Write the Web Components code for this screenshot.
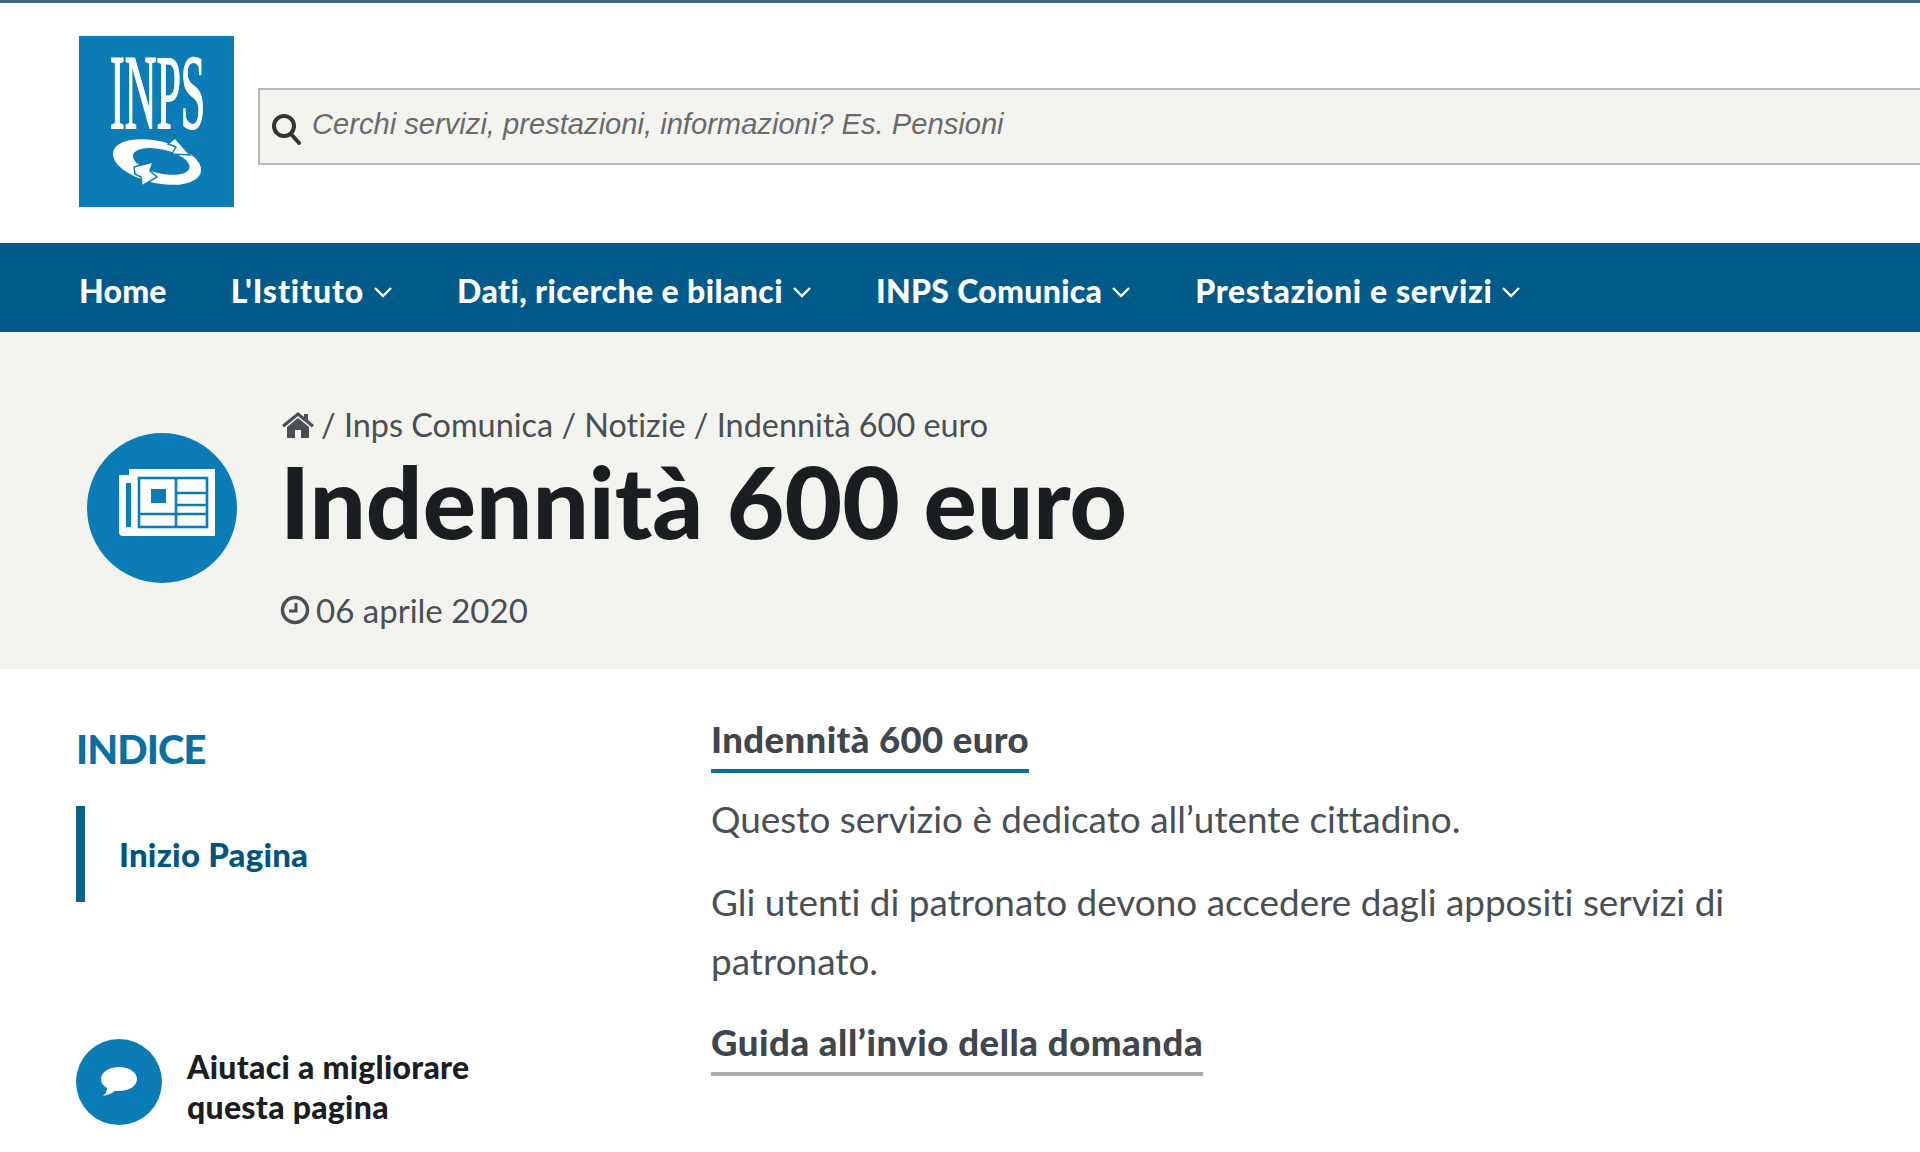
<!DOCTYPE html>
<html lang="it"><head><meta charset="utf-8"><title>Indennità 600 euro</title>
<style>
html,body{margin:0;padding:0;background:#fff;height:1152px;overflow:hidden;font-family:Lato,"Noto Sans",sans-serif;font-variant-ligatures:none}
</style></head><body>
<inps-header></inps-header>
<inps-nav>
  <nav-item plain style="letter-spacing:.2px">Home</nav-item>
  <nav-item style="letter-spacing:.85px">L'Istituto</nav-item>
  <nav-item style="letter-spacing:.4px">Dati, ricerche e bilanci</nav-item>
  <nav-item style="letter-spacing:.3px">INPS Comunica</nav-item>
  <nav-item style="letter-spacing:.65px">Prestazioni e servizi</nav-item>
</inps-nav>
<page-hero></page-hero>
<page-content>
  <side-index slot="side"></side-index>
  <article-body slot="main"></article-body>
</page-content>
<script>
function def(name, html){
  customElements.define(name, class extends HTMLElement{
    constructor(){super();this.attachShadow({mode:'open'}).innerHTML=html(this);}
  });
}
def('inps-logo',()=>`<style>:host{display:block;width:155px;height:171px;background:#0b7cb6}svg{display:block;overflow:visible}text{font-family:"Liberation Serif",serif;fill:#fff;stroke:#fff;stroke-width:1.800px}</style>
<svg width="155" height="171" viewBox="0 0 155 171">
<text x="0" y="0" font-size="106" transform="translate(31 92) scale(.415 1)">INPS</text>
<g transform="rotate(13 78 126)">
<ellipse cx="78" cy="126" rx="45" ry="21" fill="#fff"/>
<ellipse cx="82" cy="124.500" rx="29" ry="12" fill="#0b7cb6"/>
</g>
<path fill="#fff" stroke="#0b7cb6" stroke-width="1.500" d="M96 102l15 17-18-1 4-7-8-3zM55 131l19-5-3 9 7 6-15 9-1-9-6-3z"/>
</svg>`);
def('inps-search',()=>`<style>:host{display:flex;align-items:center;flex:1;height:77px;box-sizing:border-box;background:#f3f3f0;border:2px solid #b9b9b6;border-right:0;padding-left:11px;gap:9px;font:italic 29.150px "Liberation Sans",sans-serif;color:#6a6a6a}svg{flex:none;margin-top:4px}span{margin-top:-5px}</style>
<svg width="32" height="34" viewBox="0 0 32 34" fill="none" stroke="#333" stroke-width="4"><circle cx="13" cy="14" r="10"/><path d="M20 22l8 9" stroke-linecap="round"/></svg><span>Cerchi servizi, prestazioni, informazioni? Es. Pensioni</span>`);
def('inps-header',()=>`<style>:host{display:flex;align-items:flex-start;box-sizing:border-box;height:243px;border-top:3px solid #3f6480;padding:33px 0 0 79px;gap:24px}inps-search{margin-top:52px}</style><inps-logo></inps-logo><inps-search></inps-search>`);
def('inps-nav',()=>`<style>:host{display:flex;align-items:center;box-sizing:border-box;height:89px;background:#005a8a;padding:6px 0 0 79px;gap:64px}</style><slot></slot>`);
def('nav-item',(el)=>`<style>:host{display:flex;align-items:center;gap:9px;color:#fff;font:900 32px Lato,sans-serif;white-space:nowrap}svg{margin-top:2px}</style><slot></slot>${el.hasAttribute('plain')?'':'<svg width="20" height="12" viewBox="0 0 20 12" fill="none" stroke="#fff" stroke-width="2.4"><path d="M2 2l8 8 8-8"/></svg>'}`);
def('page-hero',()=>`<style>:host{display:flex;box-sizing:border-box;height:337px;background:#f3f3f0;padding:0 0 0 87px;gap:44px;color:#4a4f54}
.c{flex:none;width:150px;height:150px;border-radius:50%;background:#0b7cb6;display:flex;align-items:center;justify-content:center;margin-top:101px}
.c svg{margin:-11px 0 0 10px}
.t{padding-top:68px}
.b{display:flex;align-items:center;gap:7px;font-size:32.400px;line-height:50px;height:50px;margin-left:1px}
h1{margin:-1.500px 0 0 -1px;font:900 99.500px/104px Lato,sans-serif;color:#1b1e21}
.d{display:flex;align-items:center;gap:6px;font-size:33px;line-height:50px;margin:32px 0 0 -1px}
</style>
<div class="c"><svg width="96" height="67" viewBox="0 0 96 67">
<path fill="#fff" d="M10 0h86v67H4a4 4 0 0 1-4-4V6h10z"/>
<g fill="none" stroke="#0b7cb6" stroke-width="2.600"><path d="M9.500 14v44" stroke-width="5"/><rect x="20" y="9" width="68" height="49"/><path d="M57 9v49M57 24h31M57 36h31M20 45h68"/></g>
<rect x="32" y="20" width="15" height="14" fill="#0b7cb6"/>
</svg></div>
<div class="t"><div class="b"><svg width="32" height="28" viewBox="0 0 32 28"><path fill="#4a4f54" d="M16 7 5 16v10a1 1 0 0 0 1 1h7v-8h6v8h7a1 1 0 0 0 1-1V16zM16 1 0 14l2 2.500L16 5l14 11.500L32 14l-6-5V3h-4v3z"/></svg><span>/ Inps Comunica / Notizie / Indennità 600 euro</span></div>
<h1>Indennità 600 euro</h1>
<div class="d"><svg width="30" height="30" viewBox="0 0 30 30" fill="none" stroke="#4a4f54" stroke-width="3.500"><circle cx="15" cy="15" r="12.500"/><path d="M16 8v8H9" stroke-width="3"/></svg><span>06 aprile 2020</span></div></div>`);
def('page-content',()=>`<style>:host{display:grid;grid-template-columns:635px 1fr;padding:0 0 0 76px}</style><slot name="side"></slot><slot name="main"></slot>`);
def('side-index',()=>`<style>:host{display:block;padding-top:55px}
h2{margin:0;font:900 40px/50px Lato,sans-serif;letter-spacing:-.9px;color:#0b6fa3}
.i{margin-top:32px;height:96px;border-left:9px solid #0a6488;padding-left:34px;display:flex;align-items:center;font:900 33px Lato,sans-serif;letter-spacing:.2px;color:#00557f}
.f{display:flex;align-items:center;gap:25px;margin-top:135.500px;font:900 32px/40px Lato,sans-serif;letter-spacing:.27px;color:#1b1e21}
.f>div:last-child{padding-top:9px}
.o{width:86px;height:86px;border-radius:50%;background:#0b7cb6;display:flex;align-items:center;justify-content:center}
</style><h2>INDICE</h2><div class="i">Inizio Pagina</div>
<div class="f"><div class="o"><svg width="36" height="30" viewBox="0 0 36 30"><path fill="#fff" d="M18 0c10 0 18 5 18 12s-8 12-18 12c-1 0-3 0-4-.3C11 26 7 28 2 29c2-2 4-4 4-8C2 19 0 16 0 12 0 5 8 0 18 0z"/></svg></div><div>Aiutaci a migliorare<br>questa pagina</div></div>`);
def('article-body',()=>`<style>:host{display:block;padding-top:45px;font-size:36.900px;color:#4a4f54;width:1040px}
h3{display:inline-block;margin:0;font:900 36.500px/50px Lato,sans-serif;letter-spacing:.4px;padding-bottom:5px;border-bottom:4px solid #0b6f9e;color:#3f464d}
h3.g{border-bottom-color:#a9adb0;letter-spacing:.55px}
p{margin:0;line-height:59px}
.a{margin-top:17px}.b{margin-top:24px}.w{margin-top:26px}
</style><h3>Indennità 600 euro</h3><p class="a">Questo servizio è dedicato all’utente cittadino.</p><p class="b">Gli utenti di patronato devono accedere dagli appositi servizi di patronato.</p><div class="w"><h3 class="g">Guida all’invio della domanda</h3></div>`);
</script>
</body></html>
